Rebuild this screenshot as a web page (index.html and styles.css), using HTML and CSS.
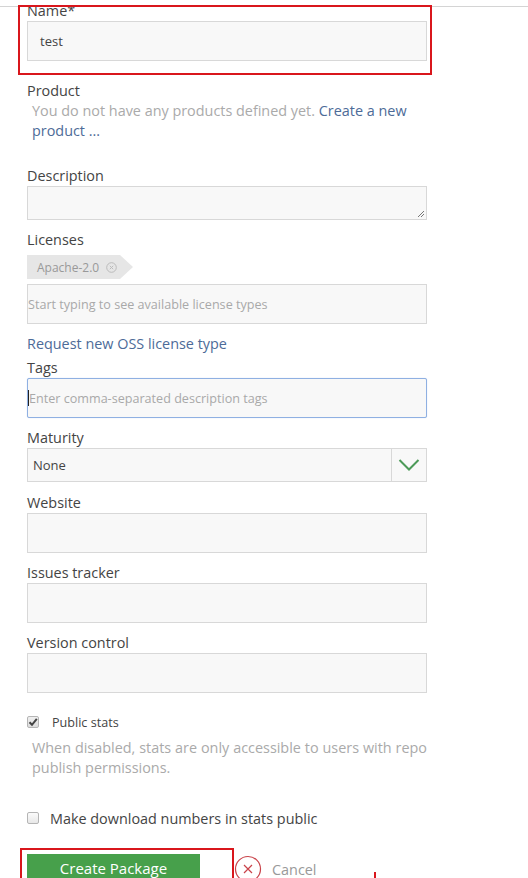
FILE: index.html
```html
<!DOCTYPE html>
<html>
<head>
<meta charset="utf-8">
<link rel="stylesheet" href="styles.css">
</head>
<body>
<div class="topline"></div>
<div class="mark mark-name"></div>
<div class="mark mark-button"></div>
<div class="mark-tick"></div>
<form class="form">
  <div class="field">
    <div class="label">Name*</div>
    <div class="input input-name">test</div>
  </div>

  <div class="field field-product">
    <div class="label">Product</div>
    <p class="hint">You do not have any products defined yet. <a class="link">Create a new</a> <a class="link">product ...</a></p>
  </div>

  <div class="field field-desc">
    <div class="label">Description</div>
    <div class="input textarea">
      <svg class="grip" width="8" height="8" viewBox="0 0 8 8"><path d="M7 1 L1 7 M7 4 L4 7" stroke="#777" stroke-width="1" fill="none"/></svg>
    </div>
  </div>

  <div class="field field-lic">
    <div class="label">Licenses</div>
    <div class="tag">
      <span>Apache-2.0</span>
      <svg class="tag-x" width="11" height="11" viewBox="0 0 11 11"><circle cx="5.5" cy="5.5" r="4.8" stroke="#bbb" stroke-width="1" fill="none"/><path d="M3.8 3.8 L7.2 7.2 M7.2 3.8 L3.8 7.2" stroke="#bbb" stroke-width="1"/></svg>
    </div>
    <div class="input input-plain placeholder">Start typing to see available license types</div>
  </div>

  <a class="link request">Request new OSS license type</a>

  <div class="field field-tags">
    <div class="label">Tags</div>
    <div class="input input-plain input-focus placeholder"><span class="caret"></span>Enter comma-separated description tags</div>
  </div>

  <div class="field field-gap">
    <div class="label">Maturity</div>
    <div class="input select">
      <span class="select-value">None</span>
      <span class="select-btn">
        <svg width="22" height="14" viewBox="0 0 22 14"><path d="M1.5 2 L11 11.5 L20.5 2" stroke="#4c9a58" stroke-width="2" fill="none"/></svg>
      </span>
    </div>
  </div>

  <div class="field field-gap1">
    <div class="label">Website</div>
    <div class="input"></div>
  </div>

  <div class="field field-gap">
    <div class="label">Issues tracker</div>
    <div class="input"></div>
  </div>

  <div class="field field-gap">
    <div class="label">Version control</div>
    <div class="input"></div>
  </div>

  <div class="check-row check-public">
    <span class="checkbox checked">
      <svg width="10" height="10" viewBox="0 0 10 10"><path d="M1.5 5.2 L4 7.8 L8.8 1.8" stroke="#444" stroke-width="2" fill="none"/></svg>
    </span>
    <span class="check-label">Public stats</span>
  </div>
  <p class="hint help">When disabled, stats are only accessible to users with repo publish permissions.</p>

  <div class="check-row check-dl">
    <span class="checkbox"></span>
    <span class="check-label big">Make download numbers in stats public</span>
  </div>

  <div class="actions">
    <button type="button" class="btn-create">Create Package</button>
    <span class="cancel">
      <svg width="28" height="28" viewBox="0 0 28 28"><circle cx="14" cy="14" r="12.5" stroke="#c9434a" stroke-width="1.2" fill="none"/><path d="M10 10 L18 18 M18 10 L10 18" stroke="#c9434a" stroke-width="1.2"/></svg>
      <span class="cancel-text">Cancel</span>
    </span>
  </div>
</form>
</body>
</html>
```

FILE: styles.css
```css
html, body {
  margin: 0;
  padding: 0;
  background: #fff;
}
body {
  font-family: "Open Sans", "DejaVu Sans", sans-serif;
  color: #444;
  height: 878px;
  overflow: hidden;
  position: relative;
}
.topline {
  position: absolute;
  left: 0;
  right: 0;
  top: 6px;
  height: 1px;
  background: #d4d4d4;
}
.mark {
  position: absolute;
  border: 2px solid #d9161c;
  box-sizing: border-box;
  z-index: 5;
}
.mark-name {
  left: 18px;
  top: 5px;
  width: 414px;
  height: 70px;
}
.mark-button {
  left: 20px;
  top: 848px;
  width: 214px;
  height: 40px;
}
.mark-tick {
  position: absolute;
  left: 374px;
  top: 872px;
  width: 2px;
  height: 10px;
  background: #d9161c;
}
.form {
  position: relative;
  width: 400px;
  margin: 0;
  padding: 1px 0 0 27px;
  display: flex;
  flex-direction: column;
}
.field {
  display: flex;
  flex-direction: column;
}
.label {
  font-size: 14.4px;
  line-height: 20px;
  color: #444;
}
.input {
  box-sizing: border-box;
  height: 40px;
  width: 400px;
  border: 1px solid #d8d8d8;
  background: #f8f8f8;
  font-size: 13px;
  color: #444;
  display: flex;
  align-items: center;
}
.input-name {
  padding-left: 12px;
}
.input-plain {
  padding-left: 0;
}
.placeholder {
  color: #a9a9a9;
  font-size: 12.6px;
}
.input-focus {
  border-color: #8fb0e2;
  border-radius: 2px;
  box-shadow: 0 0 1px #b8cdee;
}
.caret {
  display: inline-block;
  width: 1px;
  height: 16px;
  background: #222;
}
.field-product {
  margin-top: 20px;
}
.hint {
  margin: 0;
  padding-left: 5px;
  font-size: 14.4px;
  line-height: 20px;
  color: #aaa;
}
.link {
  color: #4d6b98;
  text-decoration: none;
  cursor: pointer;
}
.field-desc {
  margin-top: 25px;
}
.textarea {
  height: 34px;
  position: relative;
}
.grip {
  position: absolute;
  right: 1px;
  bottom: 1px;
}
.field-lic {
  margin-top: 10px;
}
.tag {
  margin-top: 5px;
  margin-bottom: 5px;
  width: 106px;
  height: 24px;
  box-sizing: border-box;
  padding-left: 10px;
  background: #e6e6e6;
  clip-path: polygon(0 0, 93px 0, 106px 50%, 93px 100%, 0 100%);
  display: flex;
  align-items: center;
  gap: 7px;
  font-size: 12px;
  color: #999;
}
.request {
  margin-top: 10px;
  font-size: 14.4px;
  line-height: 20px;
}
.field-tags {
  margin-top: 4px;
}
.field-gap {
  margin-top: 10px;
}
.field-gap1 {
  margin-top: 11px;
}
.select {
  height: 34px;
  justify-content: space-between;
  padding-left: 5px;
}
.select-btn {
  width: 34px;
  height: 32px;
  border-left: 1px solid #d8d8d8;
  display: flex;
  align-items: center;
  justify-content: center;
}
.check-row {
  display: flex;
  align-items: center;
  height: 20px;
}
.check-public {
  margin-top: 19px;
}
.checkbox {
  box-sizing: border-box;
  width: 12px;
  height: 12px;
  border: 1px solid #b5b5b5;
  border-radius: 2px;
  background: linear-gradient(#fbfbfb, #e8e8e8);
  display: flex;
  align-items: center;
  justify-content: center;
}
.checkbox.checked {
  background: linear-gradient(#f0f0f0, #dcdcdc);
}
.check-label {
  margin-left: 13px;
  font-size: 12.6px;
  color: #444;
}
.check-label.big {
  margin-left: 11px;
  font-size: 14.4px;
}
.help {
  margin-top: 6px;
  width: 395px;
  text-align: justify;
}
.check-dl {
  margin-top: 30px;
}
.actions {
  margin-top: 26px;
  display: flex;
  align-items: flex-start;
}
.btn-create {
  width: 173px;
  height: 30px;
  border: 0;
  margin: 0;
  padding: 0 0 2px;
  background: #47a04b;
  color: #fff;
  font-family: "Open Sans", "DejaVu Sans", sans-serif;
  font-size: 15px;
  line-height: 28px;
}
.cancel {
  display: flex;
  align-items: center;
  margin-left: 34px;
  margin-top: 1px;
}
.cancel-text {
  margin-left: 10px;
  font-size: 14.4px;
  color: #999;
}
```
